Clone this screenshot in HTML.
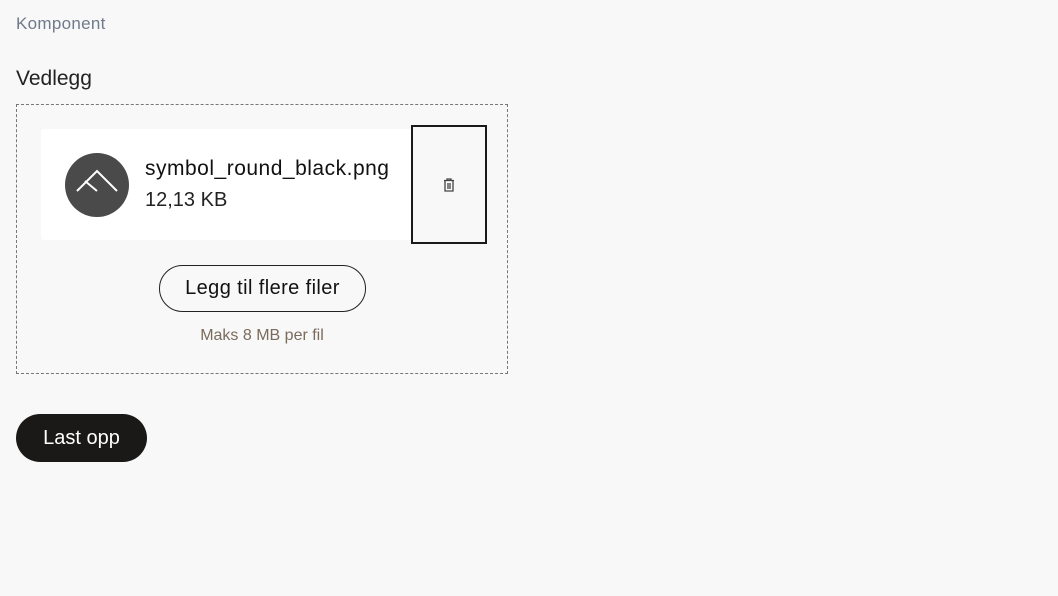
<!DOCTYPE html>
<html><head><style>
body{margin:0;width:1058px;height:596px;background:#f8f8f8;font-family:"Liberation Sans",sans-serif;position:relative;overflow:hidden;color:#1a1a1a}
.a{position:absolute}
</style></head><body>
<div class="a" style="left:16px;top:14px;font-size:17px;letter-spacing:0.3px;color:#6f7a8a">Komponent</div>
<div class="a" style="left:16px;top:67px;font-size:21px;color:#222">Vedlegg</div>
<div class="a" style="left:16px;top:104px;width:490px;height:268px;border:1px dashed #777"></div>
<div class="a" style="left:41px;top:129px;width:372px;height:111px;background:#fff;border-radius:3px"></div>
<svg class="a" style="left:65px;top:153px" width="64" height="64" viewBox="0 0 64 64">
<circle cx="32" cy="32" r="32" fill="#4a4a4a"/>
<path d="M12 38 L32 18 L52 38 M20 28 L32 38" stroke="#fff" stroke-width="2" fill="none"/>
</svg>
<div class="a" style="left:145px;top:157px;font-size:21px;letter-spacing:0.5px;color:#111">symbol_round_black.png</div>
<div class="a" style="left:145px;top:189px;font-size:20px;color:#222">12,13 KB</div>
<div class="a" style="left:411px;top:125px;width:72px;height:115px;border:2px solid #1a1a1a;background:#f8f8f8"></div>
<svg class="a" style="left:443px;top:178px" width="12" height="14" viewBox="0 0 12 14">
<path d="M1 2.5 H11 M4 2.5 V1 H8 V2.5 M2 2.5 V13 H10 V2.5 M5 5 V11 M7 5 V11" stroke="#444" stroke-width="1.3" fill="none"/>
</svg>
<div class="a" style="left:159px;top:265px;width:207px;height:47px;border:1px solid #222;border-radius:24px;box-sizing:border-box;text-align:center;line-height:45px;font-size:20px;letter-spacing:0.4px;color:#111">Legg til flere filer</div>
<div class="a" style="left:16px;width:492px;top:327px;text-align:center;font-size:16px;color:#7a6b5c">Maks 8 MB per fil</div>
<div class="a" style="left:16px;top:414px;width:131px;height:48px;border-radius:24px;background:#1b1917;color:#fff;text-align:center;line-height:48px;font-size:20px">Last opp</div>
</body></html>
